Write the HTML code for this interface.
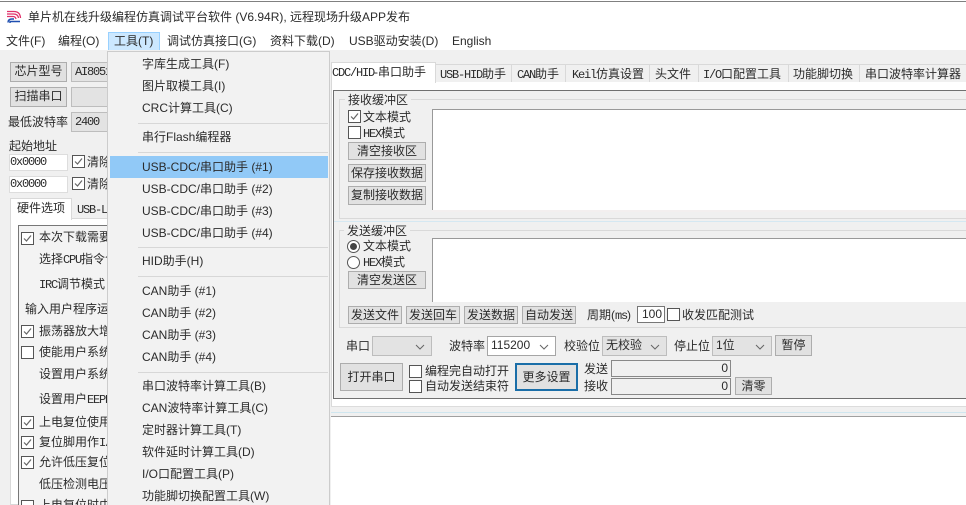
<!DOCTYPE html>
<html><head><meta charset="utf-8">
<style>
html,body{margin:0;padding:0;background:#fff}
#r{position:relative;width:966px;height:505px;overflow:hidden;background:#fff;font:12px/16px "Liberation Sans","Noto Sans CJK SC",sans-serif;color:#2b2b2b}
#r div{position:absolute;box-sizing:border-box}
.t{white-space:nowrap;height:16px}
.m{font:12px/16px "Liberation Mono","Noto Sans CJK SC",monospace;letter-spacing:-1.2px}
.b{background:#e1e1e1;border:1px solid #adadad;text-align:center;white-space:nowrap;line-height:16px}
.c{width:13px;height:13px;background:#fff;border:1px solid #555}
.c svg{position:absolute;left:0;top:0}
.g{background:#e3e3e3;border:1px solid #bdbdbd}
.w{background:#fff;border:1px solid #a5a5a5}
.h{height:1px;background:#d9d9d9}
.v{width:1px;background:#d9d9d9}
.cb{white-space:nowrap;line-height:17px;padding-left:3px}
.cb svg{position:absolute;right:5px;top:6px}
.rad{width:13px;height:13px;border:1px solid #555;border-radius:50%;background:#fff}
.sep{left:138px;width:190px;height:1px;background:#d7d7d7}
</style></head><body>
<div id="r">
<div style="left:0;top:1px;width:966px;height:1px;background:#808080"></div>
<svg style="position:absolute;left:7px;top:10px" width="15" height="14" viewBox="0 0 15 14"><path d="M0 1.5H7Q13 1.5 13.5 8M0 4H6.5Q11 4 11.5 8M0 6.5H6Q8.500 6.500 9 9" fill="none" stroke="#e0306a" stroke-width="1.300"/><path d="M1 12.500Q1 9 5 9H7M3 13V11.500H13" fill="none" stroke="#1f4fb0" stroke-width="1.500"/></svg>
<div class="t" style="left:28px;top:9px">单片机在线升级编程仿真调试平台软件 (V6.94R), 远程现场升级APP发布</div>
<div class="t" style="left:6px;top:33px">文件(F)</div>
<div class="t" style="left:58px;top:33px">编程(O)</div>
<div style="left:108px;top:32px;width:52px;height:19px;background:#cce8ff;border:1px solid #99d1ff"></div>
<div class="t" style="left:114px;top:33px">工具(T)</div>
<div class="t" style="left:167px;top:33px">调试仿真接口(G)</div>
<div class="t" style="left:270px;top:33px">资料下载(D)</div>
<div class="t" style="left:349px;top:33px">USB驱动安装(D)</div>
<div class="t" style="left:452px;top:33px">English</div>

<div style="left:0;top:50px;width:966px;height:366px;background:#f0f0f0"></div>
<div style="left:331px;top:416px;width:635px;height:1px;background:#a0a0a0"></div>
<div style="left:0;top:416px;width:331px;height:89px;background:#f0f0f0"></div>
<div style="left:331px;top:82px;width:635px;height:324px;background:#fff"></div>
<div style="left:331px;top:406px;width:635px;height:1px;background:#dcdcdc"></div>
<div style="left:331px;top:412px;width:635px;height:1px;background:#cfe6ef"></div>
<div style="left:331px;top:82px;width:1px;height:324px;background:#d9d9d9"></div>

<!-- left panel -->
<div class="b" style="left:10px;top:62px;width:57px;height:20px">芯片型号</div>
<div class="g cb" style="left:71px;top:62px;width:50px;height:20px"><span class="m">AI8051</span></div>
<div class="b" style="left:10px;top:87px;width:57px;height:20px">扫描串口</div>
<div class="g" style="left:71px;top:87px;width:50px;height:20px"></div>
<div class="t" style="left:8px;top:114px">最低波特率</div>
<div class="g cb" style="left:71px;top:112px;width:50px;height:20px"><span class="m">2400</span></div>
<div class="t" style="left:9px;top:138px">起始地址</div>
<div class="w m" style="left:9px;top:154px;width:59px;height:17px;border-color:#ddd;line-height:15px">0x0000</div>
<div class="c" style="left:72px;top:155px"><svg width="11" height="11"><path d="M2 5.500L4.500 8L9 2.500" fill="none" stroke="#666" stroke-width="1.200"/></svg></div>
<div class="t" style="left:87px;top:154px">清除</div>
<div class="w m" style="left:9px;top:176px;width:59px;height:17px;border-color:#ddd;line-height:15px">0x0000</div>
<div class="c" style="left:72px;top:177px"><svg width="11" height="11"><path d="M2 5.500L4.500 8L9 2.500" fill="none" stroke="#666" stroke-width="1.200"/></svg></div>
<div class="t" style="left:87px;top:176px">清除</div>

<div style="left:10px;top:218px;width:110px;height:287px;background:#fff;border:1px solid #d9d9d9"></div>
<div style="left:10px;top:198px;width:62px;height:22px;background:#fff;border:1px solid #d9d9d9;border-bottom:0"></div>
<div class="t" style="left:17px;top:200px">硬件选项</div>
<div class="t m" style="left:77px;top:202px">USB-L</div>
<div style="left:18px;top:225px;width:100px;height:290px;background:#f3f3f3;border:1px solid #777"></div>
<div class="c" style="left:21px;top:232px"><svg width="11" height="11"><path d="M2 5.500L4.500 8L9 2.500" fill="none" stroke="#666" stroke-width="1.200"/></svg></div>
<div class="t" style="left:39px;top:229px">本次下载需要</div>
<div class="t" style="left:39px;top:251px">选择<span class="m">CPU</span>指令令</div>
<div class="t" style="left:39px;top:276px"><span class="m">IRC</span>调节模式</div>
<div class="t" style="left:25px;top:301px">输入用户程序运</div>
<div class="c" style="left:21px;top:325px"><svg width="11" height="11"><path d="M2 5.500L4.500 8L9 2.500" fill="none" stroke="#666" stroke-width="1.200"/></svg></div>
<div class="t" style="left:39px;top:323px">振荡器放大增</div>
<div class="c" style="left:21px;top:346px"></div>
<div class="t" style="left:39px;top:344px">使能用户系统</div>
<div class="t" style="left:39px;top:366px">设置用户系统</div>
<div class="t" style="left:39px;top:391px">设置用户<span class="m">EEPROM</span></div>
<div class="c" style="left:21px;top:416px"><svg width="11" height="11"><path d="M2 5.500L4.500 8L9 2.500" fill="none" stroke="#666" stroke-width="1.200"/></svg></div>
<div class="t" style="left:39px;top:414px">上电复位使用</div>
<div class="c" style="left:21px;top:436px"><svg width="11" height="11"><path d="M2 5.500L4.500 8L9 2.500" fill="none" stroke="#666" stroke-width="1.200"/></svg></div>
<div class="t" style="left:39px;top:434px">复位脚用作<span class="m">I/O</span></div>
<div class="c" style="left:21px;top:456px"><svg width="11" height="11"><path d="M2 5.500L4.500 8L9 2.500" fill="none" stroke="#666" stroke-width="1.200"/></svg></div>
<div class="t" style="left:39px;top:454px">允许低压复位</div>
<div class="t" style="left:39px;top:476px">低压检测电压</div>
<div class="c" style="left:21px;top:500px"></div>
<div class="t" style="left:39px;top:497px">上电复位时由</div>

<!-- menu -->
<div style="left:107px;top:51px;width:223px;height:460px;background:#f2f2f2;border:1px solid #ccc"></div>
<div style="left:110px;top:156px;width:218px;height:22px;background:#91c9f7"></div>
<div class="sep" style="top:123px"></div><div class="sep" style="top:152px"></div><div class="sep" style="top:247px"></div><div class="sep" style="top:276px"></div><div class="sep" style="top:372px"></div>
<div class="t" style="left:142px;top:56px">字库生成工具(F)</div>
<div class="t" style="left:142px;top:78px">图片取模工具(I)</div>
<div class="t" style="left:142px;top:100px">CRC计算工具(C)</div>
<div class="t" style="left:142px;top:129px">串行Flash编程器</div>
<div class="t" style="left:142px;top:159px">USB-CDC/串口助手 (#1)</div>
<div class="t" style="left:142px;top:181px">USB-CDC/串口助手 (#2)</div>
<div class="t" style="left:142px;top:203px">USB-CDC/串口助手 (#3)</div>
<div class="t" style="left:142px;top:225px">USB-CDC/串口助手 (#4)</div>
<div class="t" style="left:142px;top:253px">HID助手(H)</div>
<div class="t" style="left:142px;top:283px">CAN助手 (#1)</div>
<div class="t" style="left:142px;top:305px">CAN助手 (#2)</div>
<div class="t" style="left:142px;top:327px">CAN助手 (#3)</div>
<div class="t" style="left:142px;top:349px">CAN助手 (#4)</div>
<div class="t" style="left:142px;top:378px">串口波特率计算工具(B)</div>
<div class="t" style="left:142px;top:400px">CAN波特率计算工具(C)</div>
<div class="t" style="left:142px;top:422px">定时器计算工具(T)</div>
<div class="t" style="left:142px;top:444px">软件延时计算工具(D)</div>
<div class="t" style="left:142px;top:466px">I/O口配置工具(P)</div>
<div class="t" style="left:142px;top:488px">功能脚切换配置工具(W)</div>

<!-- tabs -->
<div style="left:331px;top:62px;width:105px;height:21px;background:#fff;border:1px solid #d9d9d9;border-bottom:0"></div>
<div class="t" style="left:332px;top:64px"><span class="m">CDC/HID</span>-串口助手</div>
<div class="v" style="left:511px;top:64px;height:18px"></div>
<div class="v" style="left:565px;top:64px;height:18px"></div>
<div class="v" style="left:649px;top:64px;height:18px"></div>
<div class="v" style="left:698px;top:64px;height:18px"></div>
<div class="v" style="left:788px;top:64px;height:18px"></div>
<div class="v" style="left:859px;top:64px;height:18px"></div>
<div class="h" style="left:436px;top:64px;width:530px"></div>
<div class="t" style="left:440px;top:66px"><span class="m">USB-HID</span>助手</div>
<div class="t" style="left:517px;top:66px"><span class="m">CAN</span>助手</div>
<div class="t" style="left:572px;top:66px"><span class="m">Keil</span>仿真设置</div>
<div class="t" style="left:655px;top:66px">头文件</div>
<div class="t" style="left:703px;top:66px"><span class="m">I/O</span>口配置工具</div>
<div class="t" style="left:793px;top:66px">功能脚切换</div>
<div class="t" style="left:865px;top:66px">串口波特率计算器</div>

<!-- frame -->
<div style="left:333px;top:90px;width:640px;height:309px;background:#f0f0f0;border:1px solid #707070"></div>
<div class="h" style="left:339px;top:99px;width:627px"></div>
<div class="v" style="left:339px;top:99px;height:119px"></div>
<div class="h" style="left:339px;top:218px;width:627px"></div>
<div class="h" style="left:334px;top:221px;width:632px;background:#d5e8f2"></div>
<div class="t" style="left:345px;top:92px;background:#f0f0f0;padding:0 3px">接收缓冲区</div>
<div style="left:432px;top:109px;width:534px;height:101px;background:#fff;border-left:1px solid #999;border-top:1px solid #999"></div>
<div style="left:432px;top:210px;width:534px;height:2px;background:#f3efef"></div>
<div class="c" style="left:348px;top:110px"><svg width="11" height="11"><path d="M2 5.500L4.500 8L9 2.500" fill="none" stroke="#666" stroke-width="1.200"/></svg></div>
<div class="t" style="left:363px;top:109px">文本模式</div>
<div class="c" style="left:348px;top:126px"></div>
<div class="t" style="left:363px;top:125px"><span class="m">HEX</span>模式</div>
<div class="b" style="left:348px;top:142px;width:78px;height:18px">清空接收区</div>
<div class="b" style="left:348px;top:164px;width:78px;height:18px">保存接收数据</div>
<div class="b" style="left:348px;top:186px;width:78px;height:19px">复制接收数据</div>

<div class="h" style="left:339px;top:230px;width:627px"></div>
<div class="v" style="left:339px;top:230px;height:97px"></div>
<div class="h" style="left:339px;top:327px;width:627px"></div>
<div class="t" style="left:344px;top:223px;background:#f0f0f0;padding:0 3px">发送缓冲区</div>
<div style="left:432px;top:238px;width:534px;height:64px;background:#fff;border-left:1px solid #999;border-top:1px solid #999"></div>
<div class="rad" style="left:347px;top:240px"><div style="left:2px;top:2px;width:7px;height:7px;border-radius:50%;background:#444"></div></div>
<div class="t" style="left:363px;top:238px">文本模式</div>
<div class="rad" style="left:347px;top:256px"></div>
<div class="t" style="left:363px;top:254px"><span class="m">HEX</span>模式</div>
<div class="b" style="left:348px;top:271px;width:78px;height:18px">清空发送区</div>
<div class="b" style="left:348px;top:306px;width:54px;height:18px">发送文件</div>
<div class="b" style="left:406px;top:306px;width:54px;height:18px">发送回车</div>
<div class="b" style="left:464px;top:306px;width:54px;height:18px">发送数据</div>
<div class="b" style="left:522px;top:306px;width:54px;height:18px">自动发送</div>
<div class="t" style="left:587px;top:307px">周期(<span class="m">ms</span>)</div>
<div class="w" style="left:637px;top:306px;width:28px;height:17px;border-color:#777;text-align:right;padding-right:2px;line-height:15px">100</div>
<div class="c" style="left:667px;top:308px"></div>
<div class="t" style="left:682px;top:307px">收发匹配测试</div>

<div class="t" style="left:346px;top:338px">串口</div>
<div class="g" style="left:372px;top:336px;width:60px;height:20px"><svg style="position:absolute;right:6px;top:7px" width="10" height="6"><path d="M1 1L5 5L9 1" fill="none" stroke="#666"/></svg></div>
<div class="t" style="left:449px;top:338px">波特率</div>
<div class="w cb" style="left:487px;top:336px;width:69px;height:20px">115200<svg style="right:6px;top:7px" width="10" height="6"><path d="M1 1L5 5L9 1" fill="none" stroke="#666"/></svg></div>
<div class="t" style="left:564px;top:338px">校验位</div>
<div class="g cb" style="left:602px;top:336px;width:65px;height:20px">无校验<svg style="right:6px;top:7px" width="10" height="6"><path d="M1 1L5 5L9 1" fill="none" stroke="#666"/></svg></div>
<div class="t" style="left:674px;top:338px">停止位</div>
<div class="g cb" style="left:712px;top:336px;width:60px;height:20px">1位<svg style="right:6px;top:7px" width="10" height="6"><path d="M1 1L5 5L9 1" fill="none" stroke="#666"/></svg></div>
<div class="b" style="left:775px;top:335px;width:37px;height:21px;line-height:19px">暂停</div>
<div class="b" style="left:340px;top:363px;width:63px;height:28px;line-height:26px">打开串口</div>
<div class="c" style="left:409px;top:365px"></div>
<div class="t" style="left:425px;top:363px">编程完自动打开</div>
<div class="c" style="left:409px;top:380px"></div>
<div class="t" style="left:425px;top:378px">自动发送结束符</div>
<div class="b" style="left:515px;top:363px;width:63px;height:28px;line-height:24px;border:2px solid #1a6ea8">更多设置</div>
<div class="t" style="left:584px;top:361px">发送</div>
<div class="t" style="left:584px;top:378px">接收</div>
<div class="w" style="left:611px;top:360px;width:120px;height:17px;background:#f0f0f0;border-color:#888;text-align:right;padding-right:2px;line-height:15px">0</div>
<div class="w" style="left:611px;top:378px;width:120px;height:17px;background:#f0f0f0;border-color:#888;text-align:right;padding-right:2px;line-height:15px">0</div>
<div class="b" style="left:735px;top:377px;width:37px;height:18px">清零</div>
</div>
</body></html>
